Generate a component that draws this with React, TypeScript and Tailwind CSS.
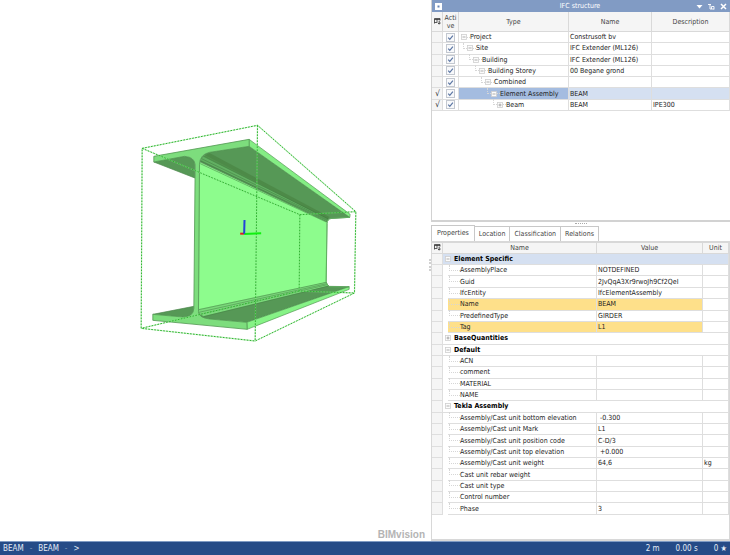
import { useState } from "react";
import clsx from "clsx";

type TreeNode = {
  type: string;
  name: string;
  description?: string;
  marked?: boolean;
  collapsed?: boolean;
};

type Property = { name: string; value?: string; unit?: string; highlight?: boolean };
type Group = { title: string; open: boolean; items: Property[] };

const nodes: TreeNode[] = [
  { type: "Project", name: "Construsoft bv" },
  { type: "Site", name: "IFC Extender (ML126)" },
  { type: "Building", name: "IFC Extender (ML126)" },
  { type: "Building Storey", name: "00 Begane grond" },
  { type: "Combined", name: "" },
  { type: "Element Assembly", name: "BEAM", marked: true },
  { type: "Beam", name: "BEAM", description: "IPE300", marked: true, collapsed: true },
];

const groups: Group[] = [
  {
    title: "Element Specific",
    open: true,
    items: [
      { name: "AssemblyPlace", value: "NOTDEFINED" },
      { name: "Guid", value: "2JvQqA3Xr9rwoJh9Cf2QeI" },
      { name: "IfcEntity", value: "IfcElementAssembly" },
      { name: "Name", value: "BEAM", highlight: true },
      { name: "PredefinedType", value: "GIRDER" },
      { name: "Tag", value: "L1", highlight: true },
    ],
  },
  { title: "BaseQuantities", open: false, items: [] },
  {
    title: "Default",
    open: true,
    items: [{ name: "ACN" }, { name: "comment" }, { name: "MATERIAL" }, { name: "NAME" }],
  },
  {
    title: "Tekla Assembly",
    open: true,
    items: [
      { name: "Assembly/Cast unit bottom elevation", value: " -0.300" },
      { name: "Assembly/Cast unit Mark", value: "L1" },
      { name: "Assembly/Cast unit position code", value: "C-D/3" },
      { name: "Assembly/Cast unit top elevation", value: " +0.000" },
      { name: "Assembly/Cast unit weight", value: "64,6", unit: "kg" },
      { name: "Cast unit rebar weight" },
      { name: "Cast unit type" },
      { name: "Control number" },
      { name: "Phase", value: "3" },
    ],
  },
];

const indents = ["w-0", "w-0", "w-[6px]", "w-[12px]", "w-[18px]", "w-[24px]", "w-[30px]"];

const cell = "border-r border-b border-[#dedede] p-0 pl-px whitespace-nowrap";
const head = "border-r border-b border-[#d9d9d9] bg-[#f5f5f5] p-0 font-normal text-[#444]";

const ColumnsIcon = () => (
  <svg viewBox="0 0 7 7" className="mx-auto size-[7px]" fill="none" stroke="#333">
    <path d="M.5 5.500v-5h5.500v2M.5 1.500h5.500M3 1v3M.5 4.500h2.500" strokeWidth=".8" />
    <path d="M5.200 2.800v3M3.700 4.600l1.500 1.600 1.500-1.600" strokeWidth=".9" />
  </svg>
);

const Expander = ({ open, label }: { open: boolean; label: string }) => (
  <button aria-label={label} className="block size-[6px] shrink-0">
    <svg viewBox="0 0 6 6" className="size-[6px]" fill="none">
      <rect x=".5" y=".5" width="5" height="5" fill="#fcfcfc" stroke="#cfcfcf" strokeWidth=".8" />
      <path d={open ? "M1.5 3h3" : "M1.5 3h3M3 1.5v3"} stroke="#8c8c8c" strokeWidth=".7" />
    </svg>
  </button>
);

const boxEdges =
  "M38 100 384 31 679 290 675 534 377 678 35 640ZM384 31 377 678M38 100 511 299 679 290M511 299 509 528 675 534M509 528 35 640";

const Beam = () => (
  <svg viewBox="0 0 431 541" className="h-full w-full" role="img" aria-label="Steel beam model">
    <g transform="translate(129.5 115) scale(.33333)" strokeLinejoin="round">
      {/* top flange, left underside */}
      <path d="M73 141 196 189V150Q196 128 165 124L120 132Z" fill="#569856" stroke="#4c864c" strokeWidth="2" />
      {/* web */}
      <path d="M209 140 592 318 590 505 207 596Z" fill="#8dfc8d" stroke="#5cab5c" strokeWidth="2" />
      {/* top flange, right underside */}
      <path d="M212 140Q216 118 240 112L359 94 661 307 598 311 592 320Z" fill="#569856" stroke="#4c864c" strokeWidth="2" />
      <path d="M212 134 590 318 594 312 226 120Z" fill="#62b062" />
      <path d="M222 124 240 114 600 306 594 312Z" fill="#47803f" opacity=".6" />
      <path d="M212 146 590 321M211 137 592 316M214 130 594 314M222 124 597 312" stroke="#3f7a3f" strokeWidth="1.5" fill="none" />
      <path d="M359 73 662 298 661 307 359 94Z" fill="#84ee84" stroke="#519651" strokeWidth="2" />
      {/* bottom flange */}
      <path d="M70 598 193 574 192 592Q186 604 160 606Z" fill="#569856" stroke="#4c864c" strokeWidth="2" />
      <path d="M207 592 590 503 598 514 659 515 352 622 240 612Q213 610 207 596Z" fill="#569856" stroke="#4c864c" strokeWidth="2" />
      <path d="M208 582 590 501 596 512 222 604 208 594Z" fill="#7ad97a" />
      <path d="M208 584 590 502M208 592 592 506M212 598 594 509M222 605 598 513" stroke="#438043" strokeWidth="1.500" fill="none" />
      <path d="M352 622 659 515 659 523 353 643Z" fill="#86f386" stroke="#519651" strokeWidth="2" />
      {/* far edge of the web */}
      <path d="M661 307 606 310Q593 313 593 325L590 499Q591 511 600 515L659 516" fill="none" stroke="#5fae5f" strokeWidth="3" />
      {/* profile face */}
      <path
        d="M73 124 359 73 359 94 240 112Q211 118 210 148L207 590Q207 608 240 612L352 622 353 643 70 616 70 598 160 606Q192 606 193 580L197 150Q196 126 165 124L73 141Z"
        fill="#7ddd7d"
        stroke="#559b55"
        strokeWidth="2.5"
      />
      {/* bounding box */}
      <path d={boxEdges} fill="none" stroke="#8fe08f" strokeOpacity=".45" strokeWidth="4" />
      <path d={boxEdges} fill="none" stroke="#2fb52f" strokeWidth="3" strokeDasharray="5 4" />
      <path d="M332 356h12" stroke="#e02020" strokeWidth="6" />
      <path d="M344 357 395 355" stroke="#10f010" strokeWidth="6" />
      <path d="M344 356 345 315" stroke="#2343d8" strokeWidth="6" />
    </g>
  </svg>
);

const StructureTable = () => {
  const [active, setActive] = useState(nodes.map(() => true));
  const toggle = (index: number) => setActive(active.map((on, i) => (i === index ? !on : on)));

  return (
    <table className="h-[99px] w-full table-fixed border-separate border-spacing-0">
      <colgroup>
        <col className="w-[11px]" />
        <col className="w-[16px]" />
        <col />
        <col className="w-[83px]" />
        <col className="w-[78px]" />
      </colgroup>
      <thead>
        <tr className="h-[20px]">
          <th className={head}>
            <ColumnsIcon />
          </th>
          <th className={clsx(head, "leading-[8px]")}>
            Acti
            <br />
            ve
          </th>
          <th className={head}>Type</th>
          <th className={head}>Name</th>
          <th className={head}>Description</th>
        </tr>
      </thead>
      <tbody>
        {nodes.map((node, i) => {
          const selected = i === 5;
          return (
            <tr key={node.type} className={clsx(selected && "bg-[#d5e0f1]")}>
              <td className={clsx(cell, "bg-[#f5f5f5] text-center text-[8px]")}>{node.marked && "√"}</td>
              <td className="border-r border-b border-[#dedede] bg-white p-0">
                <label className="relative mx-auto block size-[9px]">
                  <input
                    type="checkbox"
                    aria-label={`${node.type} active`}
                    checked={active[i]}
                    onChange={() => toggle(i)}
                    className="peer block size-[9px] appearance-none border border-[#c3c8d0] bg-[#f8f9fb]"
                  />
                  <svg viewBox="0 0 9 9" className="invisible absolute inset-0 size-[9px] peer-checked:visible" fill="none">
                    <path d="M2.2 4.6 3.8 6.3 6.9 2.7" stroke="#5b76a3" strokeWidth="1.2" />
                  </svg>
                </label>
              </td>
              <td className={clsx(cell, selected && "bg-[#a4bce0]")}>
                <div className="flex items-center">
                  <span className={clsx("shrink-0", indents[i])} />
                  {i > 0 && <span className="-mt-[5px] ml-[3px] h-[6px] w-[4px] shrink-0 border-b border-l border-dotted border-[#d6d6d6]" />}
                  {i === 0 && <span className="w-px shrink-0" />}
                  <Expander open={!node.collapsed} label={`Toggle ${node.type}`} />
                  <span className="w-[3px] shrink-0 border-b border-dotted border-[#d6d6d6]" />
                  <span>{node.type}</span>
                </div>
              </td>
              <td className={cell}>{node.name}</td>
              <td className={cell}>{node.description}</td>
            </tr>
          );
        })}
      </tbody>
    </table>
  );
};

const PropertyTable = () => (
  <table className="h-[272px] w-full table-fixed border-separate border-spacing-0">
    <colgroup>
      <col className="w-[11px]" />
      <col className="w-[5px]" />
      <col />
      <col className="w-[106px]" />
      <col className="w-[26px]" />
    </colgroup>
    <thead>
      <tr>
        <th className={head}>
          <ColumnsIcon />
        </th>
        <th colSpan={2} className={head}>
          Name
        </th>
        <th className={head}>Value</th>
        <th className={head}>Unit</th>
      </tr>
    </thead>
    {groups.map((group, g) => (
      <tbody key={group.title}>
        <tr>
          <td className={clsx(cell, "bg-[#f5f5f5]")} />
          <td colSpan={4} className={clsx(cell, g === 0 && "bg-[#d5e0f1]")}>
            <div className="flex items-center gap-[3px] pl-px">
              <Expander open={group.open} label={`Toggle ${group.title}`} />
              <span className="font-bold text-black">{group.title}</span>
            </div>
          </td>
        </tr>
        {group.items.map((item) => {
          const tone = item.highlight && "bg-[#fee08a]";
          return (
            <tr key={item.name}>
              <td className={clsx(cell, "bg-[#f5f5f5]")} />
              <td className="p-0" />
              <td className={clsx(cell, tone)}>
                <div className="flex items-center">
                  <span className="-mt-[5px] h-[6px] w-[11px] shrink-0 border-b border-l border-dotted border-[#d6d6d6]" />
                  <span>{item.name}</span>
                </div>
              </td>
              <td className={clsx(cell, "whitespace-pre", tone)}>{item.value}</td>
              <td className={cell}>{item.unit}</td>
            </tr>
          );
        })}
      </tbody>
    ))}
  </table>
);

const tabs = ["Properties", "Location", "Classification", "Relations"];

const App = () => {
  const [tab, setTab] = useState("Properties");

  return (
    <div className="flex h-screen flex-col overflow-hidden bg-white font-['DejaVu_Sans_Condensed','Open_Sans',sans-serif] text-[7px] leading-[10px] text-[#222]">
      <div className="flex min-h-0 flex-1">
        <main className="relative min-w-0 flex-1">
          <Beam />
          <span className="absolute right-[6px] bottom-0 font-['Liberation_Sans',sans-serif] text-[10px] leading-[12px] font-bold text-[#b4b4b4]">
            BIMvision
          </span>
          <span className="absolute right-0 bottom-1/2 h-[12px] border-r-2 border-dotted border-[#d0d0d0]" />
        </main>

        <aside className="flex w-[299px] shrink-0 flex-col">
          <section className="flex h-[41%] shrink-0 flex-col border-b-2 border-l border-[#d2d2d2]">
            <header className="flex h-[12px] shrink-0 items-center bg-[#819bc4] px-[3px] text-white">
              <svg viewBox="0 0 7 7" className="size-[7px]">
                <rect width="7" height="7" fill="#fff" />
                <rect x="2.5" y="2.5" width="2" height="2" fill="#6482b4" />
              </svg>
              <h2 className="flex-1 pl-[22px] text-center">IFC structure</h2>
              <div className="flex items-center gap-[5px]">
                <button aria-label="Menu">
                  <svg viewBox="0 0 7 7" className="size-[7px]">
                    <path d="M.5 2h6L3.5 5.5Z" fill="#fff" />
                  </svg>
                </button>
                <button aria-label="Pin">
                  <svg viewBox="0 0 7 7" className="size-[7px]" fill="none" stroke="#fff">
                    <path d="M0 1.500h3M2 1.500v4.500h4M3.500 3.500h2.500v3M3.500 3.500v2.500" strokeWidth=".9" />
                  </svg>
                </button>
                <button aria-label="Close">
                  <svg viewBox="0 0 7 7" className="size-[7px]">
                    <path d="M1 1l5 5M6 1 1 6" stroke="#fff" strokeWidth="1.500" />
                  </svg>
                </button>
              </div>
            </header>
            <StructureTable />
          </section>

          <div className="flex h-[3px] shrink-0 items-center justify-center">
            <span className="w-[12px] border-t border-dotted border-[#aaa]" />
          </div>

          <section className="flex min-h-0 flex-1 flex-col">
            <nav className="flex h-[16px] shrink-0 items-end">
              {tabs.map((name) => (
                <button
                  key={name}
                  onClick={() => setTab(name)}
                  className={clsx(
                    "border-t border-r border-[#c8c8c8] text-[#444]",
                    name === tab ? "h-[16px] border-l px-[5px]" : "h-[15px] px-[4px]"
                  )}
                >
                  {name}
                </button>
              ))}
            </nav>
            <div className="min-h-0 flex-1 border-x border-t-2 border-b-2 border-[#d8d8d8]">
              <PropertyTable />
            </div>
          </section>
        </aside>
      </div>

      <footer className="flex h-[14px] shrink-0 items-center border-t border-[#7f9bc4] bg-[#254b87] px-[3px] text-[8px] text-[#e4ebf6]">
        <div className="flex flex-1 items-center gap-[6px]">
          <span>BEAM</span>
          <span className="text-[#7d93b8]">-</span>
          <span>BEAM</span>
          <span className="text-[#7d93b8]">-</span>
          <span>&gt;</span>
        </div>
        <div className="flex items-center gap-[16px]">
          <span>2 m</span>
          <span>0.00 s</span>
          <span>0 ★</span>
        </div>
      </footer>
    </div>
  );
};

export default App;
